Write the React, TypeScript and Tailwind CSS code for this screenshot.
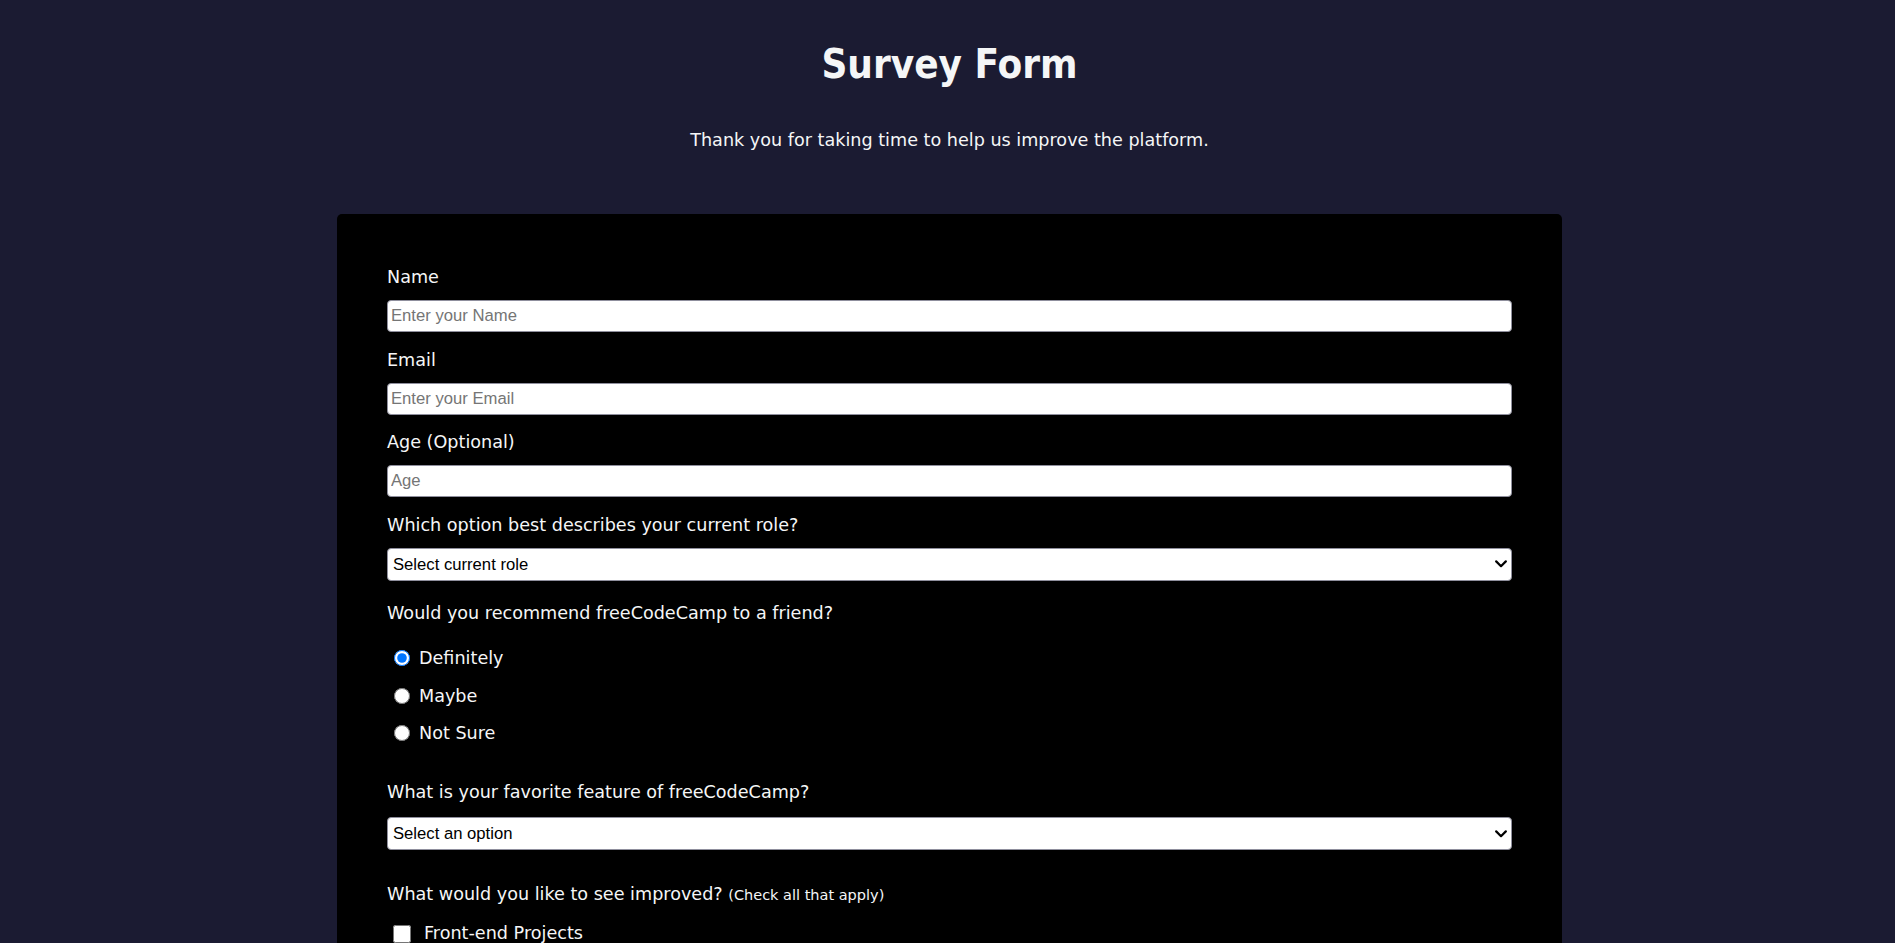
import type { ReactElement } from 'react';

const bodyFont = "font-['Tahoma','DejaVu_Sans',sans-serif]";
const titleFont = "font-['Tahoma','DejaVu_Sans_Condensed','DejaVu_Sans',sans-serif]";
const fieldFont = "font-['Liberation_Sans',Arial,sans-serif]";

function Chevron(): ReactElement {
  return (
    <svg
      className="pointer-events-none absolute right-[5px] top-1/2 -translate-y-1/2"
      width="12"
      height="8"
      viewBox="0 0 12 8"
      fill="none"
    >
      <polyline points="1.2,1.4 6,6.2 10.8,1.4" stroke="#000" strokeWidth="2.2" strokeLinecap="round" strokeLinejoin="round" />
    </svg>
  );
}

function TextField({ id, label, placeholder, type = 'text' }: { id: string; label: string; placeholder: string; type?: string }): ReactElement {
  return (
    <div className="mb-[14.5px]">
      <label htmlFor={id} className="mb-[10px] block h-[26px] text-[17.6px] leading-[26px]">
        {label}
      </label>
      <input
        id={id}
        type={type}
        placeholder={placeholder}
        className={`block h-[32px] w-full rounded-[4px] border border-[#8f8f9d] bg-white px-[3px] text-[16.67px] text-black placeholder:text-[#757575] ${fieldFont}`}
      />
    </div>
  );
}

function SelectField({ id, value }: { id: string; value: string }): ReactElement {
  return (
    <div className="relative">
      <select
        id={id}
        defaultValue=""
        className={`block h-[33px] w-full appearance-none rounded-[4px] border border-[#8f8f9d] bg-white pl-[5px] text-[16.67px] text-black ${fieldFont}`}
      >
        <option value="" disabled>
          {value}
        </option>
      </select>
      <Chevron />
    </div>
  );
}

export default function App(): ReactElement {
  const radios = ['Definitely', 'Maybe', 'Not Sure'];
  const checks = ['Front-end Projects', 'Back-end Projects', 'Data Visualization', 'Challenges', 'Open Source Community'];

  return (
    <main className={`min-h-screen bg-[#1b1b32] pb-16 pl-[4px] text-[#f5f6f7] ${bodyFont}`}>
      <header className="pt-[40px] text-center">
        <h1 className={`text-[40px] font-bold leading-[48px] ${titleFont}`}>Survey Form</h1>
        <p className="mt-[39px] text-[17.6px] leading-[26px]">Thank you for taking time to help us improve the platform.</p>
      </header>

      <form className="mx-auto mt-[61px] w-[1225px] rounded-[5px] bg-black px-[50px] pb-[50px] pt-[50px]">
        <TextField id="name" label="Name" placeholder="Enter your Name" />
        <TextField id="email" label="Email" placeholder="Enter your Email" type="email" />
        <TextField id="age" label="Age (Optional)" placeholder="Age" type="number" />

        <label htmlFor="role" className="mb-[10px] block h-[26px] text-[17.6px] leading-[26px]">
          Which option best describes your current role?
        </label>
        <SelectField id="role" value="Select current role" />

        <p className="mt-[19px] h-[26px] text-[17.6px] leading-[26px]">Would you recommend freeCodeCamp to a friend?</p>
        <div className="mt-[14px]">
          {radios.map((r, i) => (
            <label key={r} className="flex h-[37.5px] items-center gap-[9px] text-[17.6px]">
              <input type="radio" name="recommend" defaultChecked={i === 0} className="ml-[7px] h-[16px] w-[16px]" />
              {r}
            </label>
          ))}
        </div>

        <label htmlFor="feature" className="mb-[12px] mt-[27px] block h-[26px] text-[17.6px] leading-[26px]">
          What is your favorite feature of freeCodeCamp?
        </label>
        <SelectField id="feature" value="Select an option" />

        <p className="mt-[31px] h-[26px] text-[17.6px] leading-[26px]">
          What would you like to see improved? <span className="text-[14.5px]">(Check all that apply)</span>
        </p>
        <div className="mt-[8px]">
          {checks.map((c) => (
            <label key={c} className="flex h-[37px] items-center gap-[13px] text-[17.6px]">
              <input type="checkbox" className="ml-[6px] h-[18px] w-[18px]" />
              {c}
            </label>
          ))}
        </div>

        <label htmlFor="comments" className="mb-[10px] mt-[27px] block h-[26px] text-[17.6px] leading-[26px]">
          Any comments or suggestions?
        </label>
        <textarea
          id="comments"
          placeholder="Enter your comment here..."
          className={`block h-[120px] w-full rounded-[4px] border border-[#8f8f9d] bg-white px-[3px] text-[16.67px] text-black placeholder:text-[#757575] ${fieldFont}`}
        />
        <button type="submit" className="mt-[30px] block h-[45px] w-full rounded-[4px] bg-[#37af65] text-[18px] text-white">
          Submit
        </button>
      </form>
    </main>
  );
}
